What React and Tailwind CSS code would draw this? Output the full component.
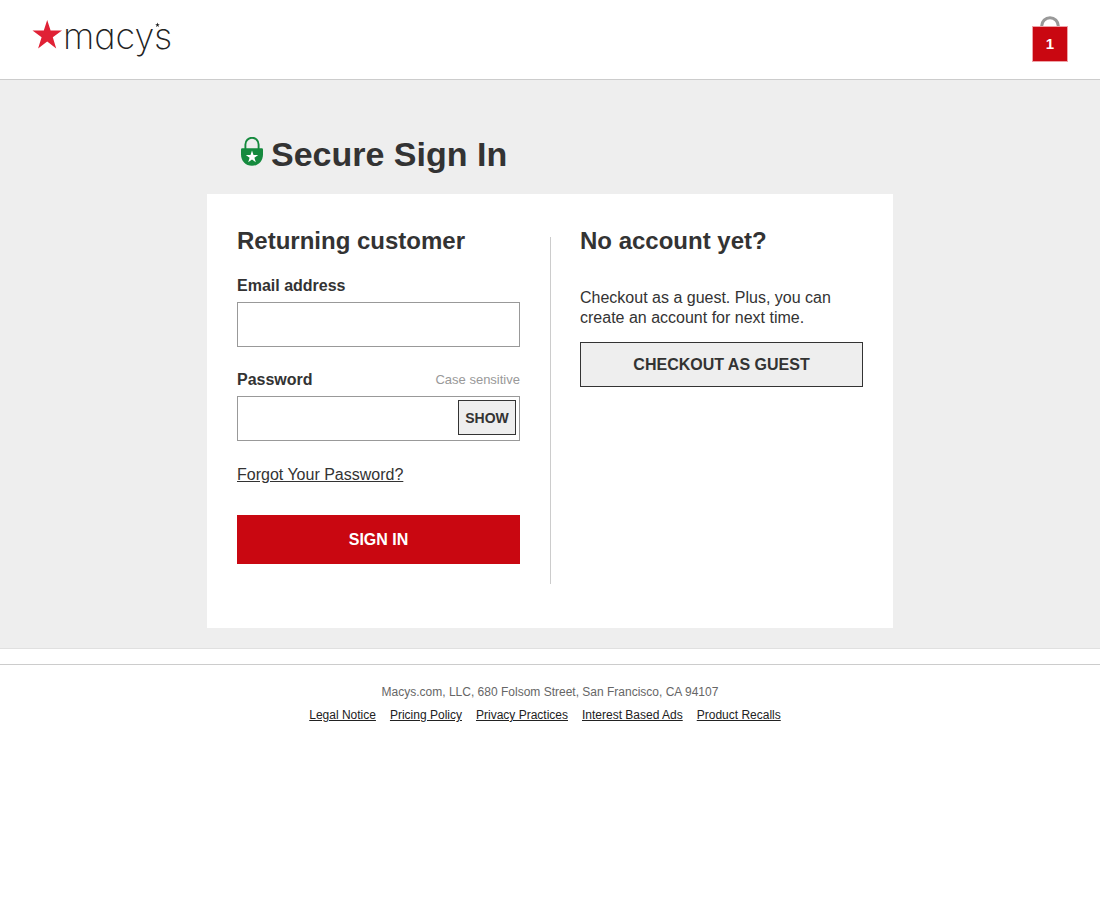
import { useState } from "react";

const footerLinks = [
  "Legal Notice",
  "Pricing Policy",
  "Privacy Practices",
  "Interest Based Ads",
  "Product Recalls",
];

function Logo() {
  return (
    <a href="#" aria-label="macy's">
      <svg width="140" height="46" viewBox="0 0 140 46" className="overflow-visible">
        <path
          d="M15.2 4L18.6 14.6H30L20.8 21.3L24.2 32.4L15.2 25.6L6.1 32.4L9.6 21.3L0.5 14.6H11.8Z"
          fill="#e02135"
        />
        <text
          x="31"
          y="33"
          fontSize="36"
          fill="#222"
          className="font-[Inter,sans-serif] font-extralight [font-feature-settings:'cv11']"
        >
          macy
        </text>
        <path
          d="M125.5 6.5L126.1 8.2H127.8L126.4 9.3L127 11L125.5 10L124 11L124.6 9.3L123.2 8.2H124.9Z"
          fill="#222"
        />
        <text
          x="122"
          y="33"
          fontSize="36"
          fill="#222"
          className="font-[Inter,sans-serif] font-extralight"
        >
          s
        </text>
      </svg>
    </a>
  );
}

function Bag() {
  return (
    <a href="#" aria-label="Shopping bag, 1 item" className="flex flex-col items-center">
      <svg width="20" height="10" viewBox="0 0 20 10">
        <path d="M1.7 10.5V10a8.3 8.3 0 0 1 16.6 0v.5" fill="none" stroke="#999" strokeWidth="3" />
      </svg>
      <span className="flex size-9 items-center justify-center border border-[#efa3a8] bg-[#c90711] text-[15px] font-bold text-white">
        1
      </span>
    </a>
  );
}

function LockIcon() {
  return (
    <svg width="22" height="30" viewBox="0 0 22 30">
      <path d="M4.4 13V7.4a6.6 6.6 0 0 1 13.2 0V13" fill="none" stroke="#158a3e" strokeWidth="1.9" />
      <path
        d="M1.2 11.2H20.8Q22 11.2 22 12.6V17.5C22 24 17.4 28.8 11 28.8S0 24 0 17.5V12.6Q0 11.2 1.2 11.2Z"
        fill="#158a3e"
      />
      <path
        d="M11 13.4L12.5 18H17.2L13.4 20.8L14.8 25.3L11 22.5L7.2 25.3L8.6 20.8L4.8 18H9.5Z"
        fill="#fff"
      />
    </svg>
  );
}

function App() {
  const [showPassword, setShowPassword] = useState(false);

  return (
    <div className="min-h-screen bg-white font-['Liberation_Sans',Arial,sans-serif] text-base text-[#333]">
      <header className="flex items-start justify-between border-b border-[#ccc] px-8 pt-4 pb-[17px]">
        <Logo />
        <Bag />
      </header>

      <main className="border-b border-[#e0e0e0] bg-[#eee] px-4 pt-[54px] pb-5">
        <div className="mx-auto max-w-[686px]">
          <div className="mb-5 flex gap-2 pl-[34px]">
            <div className="pt-[3px]">
              <LockIcon />
            </div>
            <h1 className="text-[34px] leading-10 font-bold">Secure Sign In</h1>
          </div>

          <div className="flex bg-white pt-[33px] pb-11">
            <form className="min-w-0 flex-1 px-[30px] pb-5" onSubmit={(e) => e.preventDefault()}>
              <h2 className="mb-[21px] text-2xl leading-7 font-bold">Returning customer</h2>

              <label htmlFor="email" className="mb-[6px] block leading-5 font-bold">
                Email address
              </label>
              <input
                id="email"
                type="email"
                className="mb-[23px] block h-[45px] w-full border border-[#999] px-3"
              />

              <div className="mb-[6px] flex items-center justify-between leading-5">
                <label htmlFor="password" className="font-bold">
                  Password
                </label>
                <span className="text-[13px] text-[#999]">Case sensitive</span>
              </div>
              <div className="mb-6 flex h-[45px] border border-[#999] p-[3px]">
                <input
                  id="password"
                  type={showPassword ? "text" : "password"}
                  className="min-w-0 flex-1 px-3 outline-none"
                />
                <button
                  type="button"
                  onClick={() => setShowPassword(!showPassword)}
                  className="h-[35px] w-[58px] border border-[#333] bg-[#eee] text-sm font-bold"
                >
                  SHOW
                </button>
              </div>

              <a href="#" className="mb-[30px] block w-fit leading-5 underline">
                Forgot Your Password?
              </a>

              <button type="submit" className="h-[49px] w-full bg-[#c90711] font-bold text-white">
                SIGN IN
              </button>
            </form>

            <div className="-mr-px mt-[10px] w-px bg-[#ccc]" />

            <section className="min-w-0 flex-1 px-[30px]">
              <h2 className="mb-[33px] text-2xl leading-7 font-bold">No account yet?</h2>
              <p className="mb-[14px] leading-5">
                Checkout as a guest. Plus, you can create an account for next time.
              </p>
              <button
                type="button"
                className="h-[45px] w-full border border-[#333] bg-[#eee] font-bold"
              >
                CHECKOUT AS GUEST
              </button>
            </section>
          </div>
        </div>
      </main>

      <footer className="mt-[15px] border-t border-[#ccc] pt-[19px] text-center text-xs">
        <p className="mb-[7px] text-[#666]">
          Macys.com, LLC, 680 Folsom Street, San Francisco, CA 94107
        </p>
        <ul className="flex flex-wrap justify-center gap-[14px] pr-[10px]">
          {footerLinks.map((link) => (
            <li key={link}>
              <a href="#" className="text-[#222] underline">
                {link}
              </a>
            </li>
          ))}
        </ul>
      </footer>
    </div>
  );
}

export default App;
